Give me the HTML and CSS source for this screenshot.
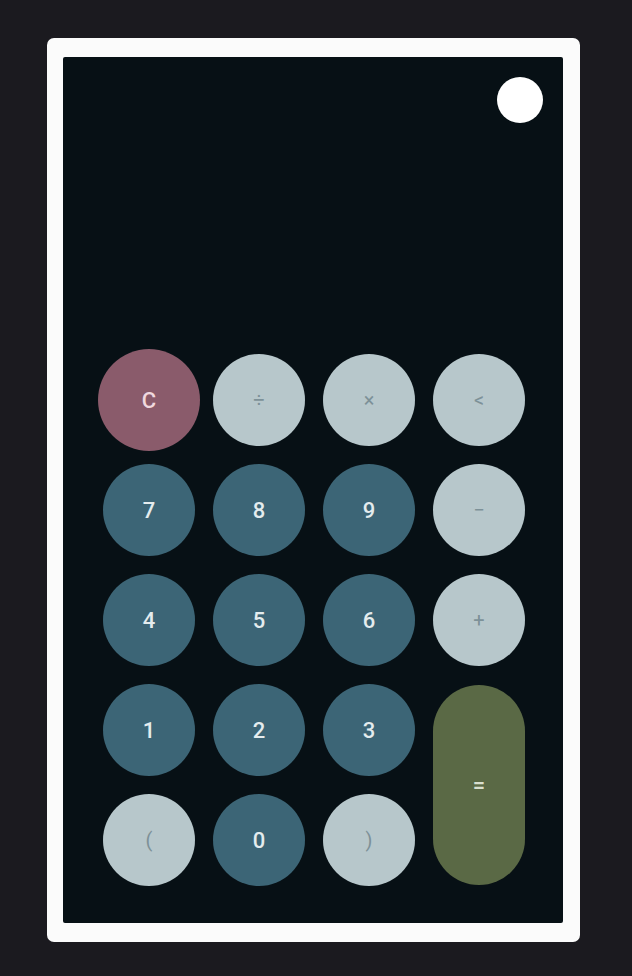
FILE: index.html
```html
<!DOCTYPE html>
<html>
<head>
<meta charset="utf-8">
<link rel="stylesheet" href="styles.css">
</head>
<body>
<div class="frame">
  <div class="screen">
    <div class="top">
      <div class="toggle"></div>
    </div>
    <div class="display"></div>
    <div class="pad">
      <button class="key clear">C</button>
      <button class="key op">÷</button>
      <button class="key op">×</button>
      <button class="key op">&lt;</button>
      <button class="key num">7</button>
      <button class="key num">8</button>
      <button class="key num">9</button>
      <button class="key op">−</button>
      <button class="key num">4</button>
      <button class="key num">5</button>
      <button class="key num">6</button>
      <button class="key op">+</button>
      <button class="key num">1</button>
      <button class="key num">2</button>
      <button class="key num">3</button>
      <button class="key eq">=</button>
      <button class="key op">(</button>
      <button class="key num">0</button>
      <button class="key op">)</button>
    </div>
  </div>
</div>
</body>
</html>
```
FILE: styles.css
```css
html, body {
  margin: 0;
  padding: 0;
  background: #1b1a1f;
  font-family: Roboto, "Noto Sans", sans-serif;
}
body {
  width: 632px;
  height: 976px;
  padding-top: 38px;
  padding-left: 47px;
  box-sizing: border-box;
}
.frame {
  width: 533px;
  height: 904px;
  box-sizing: border-box;
  background: #fbfbfb;
  border-radius: 7px;
  padding: 19px 17px 19px 16px;
}
.screen {
  height: 100%;
  background: #071015;
  border-radius: 2px;
  display: flex;
  flex-direction: column;
  padding: 20px 20px 37px 40px;
  box-sizing: border-box;
}
.top {
  display: flex;
  justify-content: flex-end;
}
.toggle {
  width: 46px;
  height: 46px;
  border-radius: 50%;
  background: #ffffff;
}
.display {
  flex: 1;
}
.pad {
  display: grid;
  grid-template-columns: repeat(4, 92px);
  grid-template-rows: repeat(5, 92px);
  column-gap: 18px;
  row-gap: 18px;
}
.key {
  border: none;
  border-radius: 46px;
  font-family: Roboto, "Noto Sans", sans-serif;
  font-size: 22px;
  font-weight: 500;
  display: flex;
  align-items: center;
  justify-content: center;
  padding: 0;
  width: 92px;
  height: 92px;
  justify-self: center;
  align-self: center;
}
.num {
  background: #3c6576;
  color: #e4ecee;
}
.op {
  background: #b7c7cb;
  color: #7d9198;
  font-size: 20px;
  font-weight: 400;
}
.clear {
  background: #8a5b6b;
  color: #f0d8de;
  width: 102px;
  height: 102px;
  border-radius: 51px;
}
.eq {
  background: #5a6945;
  color: #d9dfcf;
  grid-row: span 2;
  height: 200px;
}
```
